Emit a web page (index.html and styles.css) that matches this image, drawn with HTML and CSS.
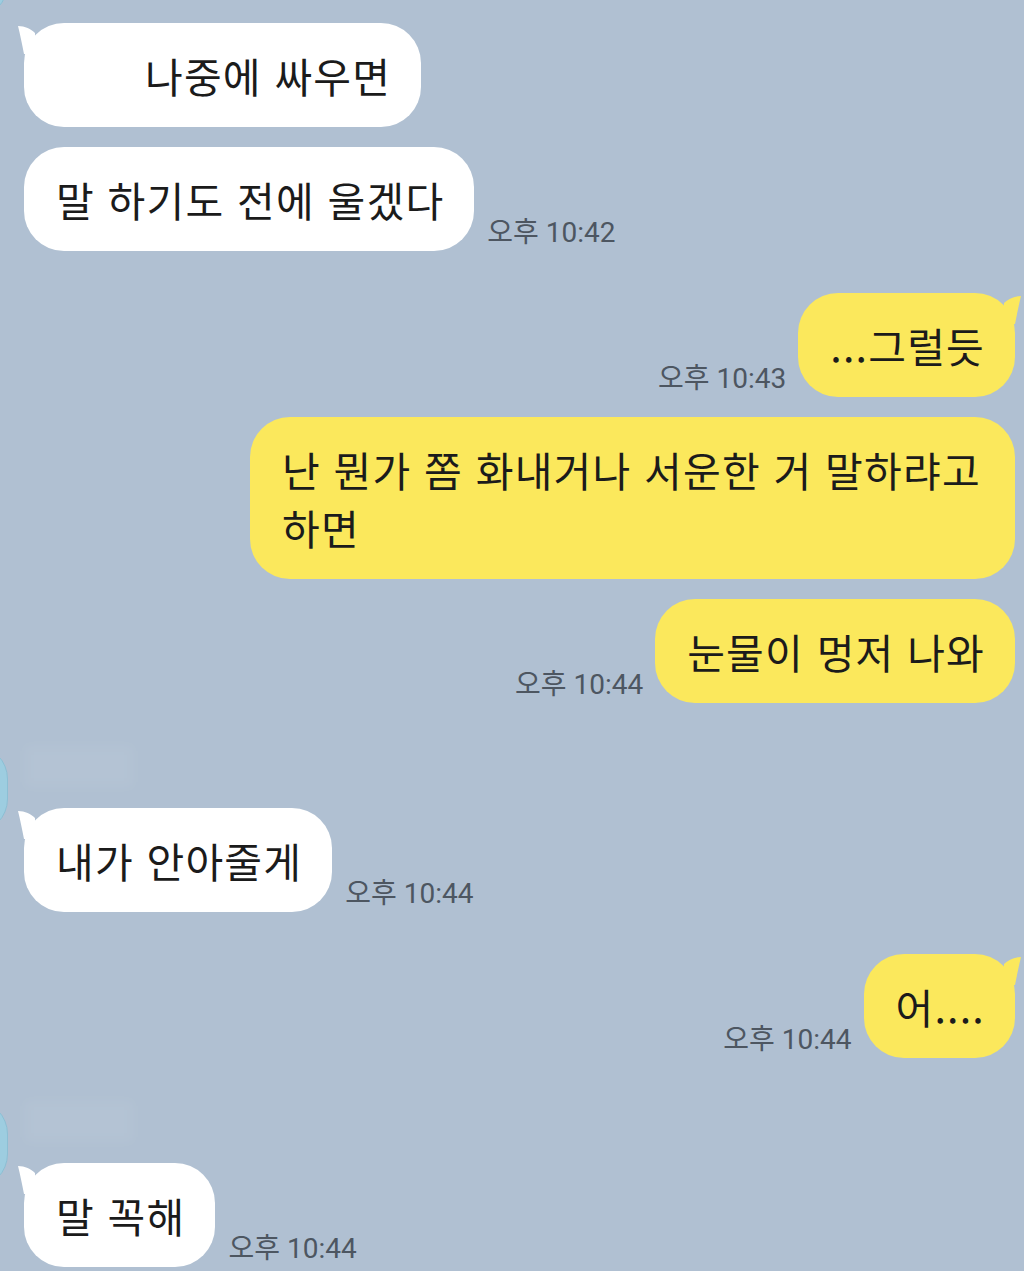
FILE: index.html
```html
<!DOCTYPE html>
<html lang="ko">
<head>
  <meta charset="UTF-8">
  <meta name="viewport" content="width=device-width, initial-scale=1.0">
  <title>채팅</title>
  <link rel="stylesheet" href="styles.css">
</head>
<body>
  <main class="chat">

    <div class="group other first">
      <div class="avatar"></div>
      <div class="msgs">
        <div class="row">
          <div class="bubble indent">나중에 싸우면<svg class="tail" viewBox="0 0 30 34"><path d="M0 4C7 4 13 7 17 11L17 32L6 32C4 22 2 12 0 4Z"/></svg></div>
        </div>
        <div class="row">
          <div class="bubble">말 하기도 전에 울겠다</div>
          <span class="time">오후 10:42</span>
        </div>
      </div>
    </div>

    <div class="group me">
      <div class="row">
        <span class="time">오후 10:43</span>
        <div class="bubble">...그럴듯<svg class="tail" viewBox="0 0 30 34"><path d="M0 4C7 4 13 7 17 11L17 32L6 32C4 22 2 12 0 4Z"/></svg></div>
      </div>
      <div class="row">
        <div class="bubble wide">난 뭔가 쫌 화내거나 서운한 거 말하랴고 하면</div>
      </div>
      <div class="row">
        <span class="time">오후 10:44</span>
        <div class="bubble">눈물이 멍저 나와</div>
      </div>
    </div>

    <div class="group other">
      <div class="avatar"></div>
      <div class="msgs">
        <div class="name"></div>
        <div class="row">
          <div class="bubble">내가 안아줄게<svg class="tail" viewBox="0 0 30 34"><path d="M0 4C7 4 13 7 17 11L17 32L6 32C4 22 2 12 0 4Z"/></svg></div>
          <span class="time">오후 10:44</span>
        </div>
      </div>
    </div>

    <div class="group me">
      <div class="row">
        <span class="time">오후 10:44</span>
        <div class="bubble">어....<svg class="tail" viewBox="0 0 30 34"><path d="M0 4C7 4 13 7 17 11L17 32L6 32C4 22 2 12 0 4Z"/></svg></div>
      </div>
    </div>

    <div class="group other">
      <div class="avatar"></div>
      <div class="msgs">
        <div class="name"></div>
        <div class="row">
          <div class="bubble">말 꼭해<svg class="tail" viewBox="0 0 30 34"><path d="M0 4C7 4 13 7 17 11L17 32L6 32C4 22 2 12 0 4Z"/></svg></div>
          <span class="time">오후 10:44</span>
        </div>
      </div>
    </div>

  </main>
</body>
</html>
```

FILE: styles.css
```css
* {
  box-sizing: border-box;
}
body {
  margin: 0;
  height: 1271px;
  overflow: hidden;
  background: #b0c0d2;
  font-family: "Noto Sans CJK KR", "Noto Sans", sans-serif;
  color: #1b1b1b;
}
.chat {
  display: flex;
  flex-direction: column;
  gap: 42px;
  padding: 0 9px 0 0;
}
.group {
  display: flex;
}
.group.other {
  align-items: flex-start;
}
.group.me {
  flex-direction: column;
  align-items: flex-end;
  gap: 20px;
}
.avatar {
  flex: none;
  width: 88px;
  height: 88px;
  margin-left: -80px;
  border-radius: 34px;
  background: #9dcde0;
  border: 1px solid #8cbfd4;
}
.first .avatar {
  margin-top: -70px;
}
.msgs {
  display: flex;
  flex-direction: column;
  gap: 20px;
  margin-left: 16px;
}
.first .msgs {
  padding-top: 23px;
}
.name {
  width: 110px;
  height: 43px;
  background: rgba(255, 255, 255, 0.05);
  filter: blur(6px);
}
.row {
  display: flex;
  align-items: flex-end;
  gap: 13px;
}
.me .row {
  justify-content: flex-end;
  gap: 12px;
}
.bubble {
  position: relative;
  padding: 23px 30px 23px 32px;
  border-radius: 40px;
  font-size: 41px;
  line-height: 58px;
  letter-spacing: 1.2px;
  word-break: keep-all;
  background: #fff;
  color: #1b1b1b;
}
.me .bubble {
  background: #fbe85c;
}
.bubble.indent {
  padding-left: 121px;
}
.bubble.wide {
  max-width: 765px;
}
.tail {
  position: absolute;
  top: -1px;
  left: -6px;
  width: 30px;
  height: 34px;
  fill: #fff;
}
.me .tail {
  left: auto;
  right: -6px;
  transform: scaleX(-1);
  fill: #fbe85c;
}
.time {
  flex: none;
  margin-bottom: 4px;
  font-family: Roboto, "Noto Sans CJK KR", sans-serif;
  font-size: 28px;
  line-height: 28px;
  color: #4d5661;
  white-space: nowrap;
}
```
